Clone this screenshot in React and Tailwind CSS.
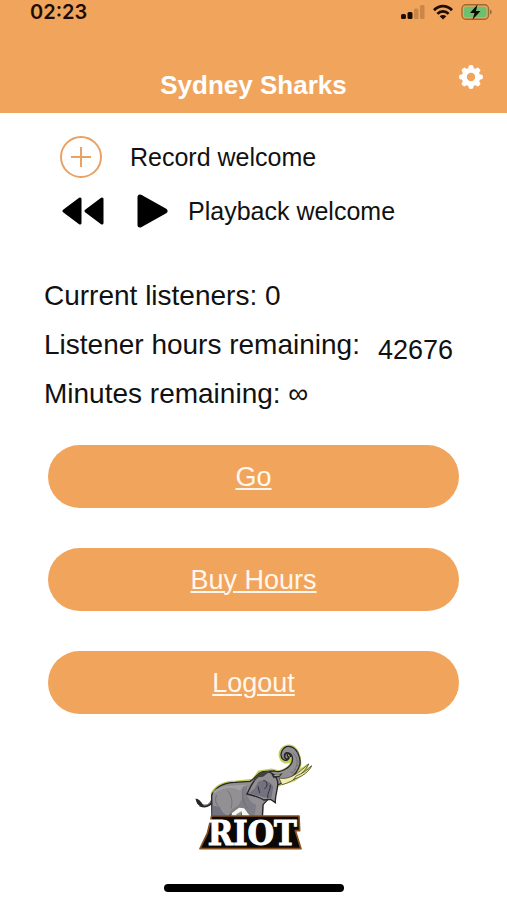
import React from 'react';

const actions = [
    { label: 'Go', href: '#go' },
    { label: 'Buy Hours', href: '#buy-hours' },
    { label: 'Logout', href: '#logout' },
];

const SignalIcon = () => (
    <svg className="w-6 h-4" viewBox="0 0 24 16" aria-hidden="true">
        <rect x="0" y="10" width="5" height="5" rx="1.5" fill="#1c0e04" />
        <rect x="6.5" y="8" width="5" height="7" rx="1.5" fill="#1c0e04" />
        <rect x="13" y="4.5" width="4.5" height="10.5" rx="1.5" fill="#c98647" />
        <rect x="19" y="1" width="4.5" height="14" rx="1.5" fill="#c98647" />
    </svg>
);

const WifiIcon = () => (
    <svg className="w-5 h-4" viewBox="0 0 20 16" aria-hidden="true">
        <g fill="none" stroke="#1c0e04" strokeWidth="2.8">
            <path d="M1 6.200C6 .7 14 .7 19 6.200" />
            <path d="M4.400 9.900C7.500 6.600 12.500 6.600 15.600 9.900" />
        </g>
        <path d="M10 15.600 6.700 12.200C8.500 10.600 11.500 10.600 13.300 12.200Z" fill="#1c0e04" />
    </svg>
);

const BatteryIcon = () => (
    <svg className="w-8 h-4" viewBox="0 0 32 16" aria-hidden="true">
        <rect x="1" y=".7" width="26.5" height="14.6" rx="4" fill="#f1a55c" stroke="#9a6a34" strokeWidth="1.4" />
        <rect x="3" y="2.7" width="22.5" height="10.6" rx="2" fill="#6cc070" />
        <path d="M29 5.500c2.300.7 2.300 4.300 0 5Z" fill="#9a6a34" />
        <path d="M16.500.5 9 9h4.500l-2 6.700L19.500 7H15Z" fill="#140b04" />
    </svg>
);

const GearIcon = () => (
    <svg className="w-6 h-6" viewBox="0 0 24 24" aria-hidden="true">
        <circle cx="12" cy="12" r="6.7" fill="none" stroke="#fff" strokeWidth="5" />
        <g fill="#fff">
            {[0, 45, 90, 135, 180, 225, 270, 315].map((angle) => (
                <path key={angle} d="M9 4 10 .5Q12-.3 14 .5L15 4Z" transform={`rotate(${angle} 12 12)`} />
            ))}
        </g>
    </svg>
);

const RiotLogo = () => (
    <svg className="w-[125px] h-[120px]" viewBox="0 0 375 360" role="img" aria-label="Riot">
        {/* highlight behind the elephant */}
        <path d="M62 170C78 145 100 136 135 136L185 131 203 106 242 100 264 106C288 98 303 86 301 70C298 82 278 85 269 70C258 48 274 28 295 28C318 29 331 60 328 90L322 104 352 85 342 103 360 92 340 113 310 133 270 146 240 160 217 205 214 240H63Z" fill="#c4cc58" stroke="#c4cc58" strokeWidth="5" strokeLinejoin="round" />
        {/* tail */}
        <path d="M68 180C62 207 48 216 26 207" fill="none" stroke="#25252a" strokeWidth="8" />
        <path d="M66 184C60 203 48 211 34 206" fill="none" stroke="#8f8e91" strokeWidth="3" />
        <path d="M16 190C22 190 28 196 35 209L26 207C18 204 19 198 16 190Z" fill="#252821" stroke="#252821" strokeWidth="4" />
        {/* body and legs */}
        <path d="M63 243 62 177C75 151 98 140 132 139L177 136C190 130 197 112 216 107L251 105C266 112 279 102 290 95 303 85 307 73 303 60 297 46 284 54 291 62 296 69 286 78 276 70 263 58 274 31 293 31 316 31 332 65 326 88 316 119 285 140 246 151L233 188 216 206 214 243 178 243 160 219 153 226 154 243 132 243 130 228 111 243Z" fill="#929092" stroke="#272729" strokeWidth="4" />
        <path d="M67 166C91 144 123 150 168 146 157 151 150 156 147 164 124 151 96 154 67 174Z" fill="#a3a1a2" />
        <path d="M169 147C162 177 174 196 196 207L190 241 178 242 160 215 148 222 129 228 108 242 122 222 143 207 154 187 158 157Z" fill="#7f7e86" />
        <path d="M64 211C78 208 90 216 95 229L109 240H64Z" fill="#747380" />
        <path d="M123 231 144 215 160 217 177 240H154L151 226 136 235V240H121Z" fill="#f7f6ef" />
        <path d="M158 151C149 180 157 203 171 218M108 163C122 175 126 196 120 218M77 177C70 192 75 208 88 216" fill="none" stroke="#65646b" strokeWidth="2" />
        {/* ear */}
        <path d="M207 112C193 127 178 150 168 174 188 179 207 184 218 192L239 190 253 200C251 178 263 157 260 137 254 112 233 101 207 112Z" fill="#929092" stroke="#25252a" strokeWidth="4" />
        <path d="M201 137C221 129 240 137 247 153L241 187 216 184C205 176 184 177 174 172L192 156Z" fill="#74727f" />
        <path d="M217 134C231 132 231 155 220 158M238 146C239 163 228 169 230 187M201 151 206 171" fill="none" stroke="#302f39" strokeWidth="3" />
        <path d="M187 127 204 110 242 103 216 122 202 124 190 136Z" fill="#41433b" />
        {/* face */}
        <path d="M238 109C248 117 263 117 275 112L265 124 247 126Z" fill="#2e2e34" />
        <path d="M250 118 266 117" stroke="#e2dc8c" strokeWidth="3" />
        {/* trunk folds */}
        <path d="M305 50C325 65 321 94 303 111M316 50 324 49M319 62 328 62M319 75 329 77M315 88 326 91M308 99 319 104M298 107 307 113" fill="none" stroke="#67666c" strokeWidth="2" />
        <path d="M300 63C294 43 279 50 281 63 286 76 299 67 292 61" fill="none" stroke="#25252a" strokeWidth="5" />
        {/* tusks */}
        <path d="M264 126C291 132 315 118 353 84 342 107 310 137 273 146Z" fill="#f3edb1" stroke="#31301d" strokeWidth="2" />
        <path d="M315 120C335 112 349 103 362 89 354 107 335 121 308 130Z" fill="#efeaa2" stroke="#31301d" strokeWidth="2" />
        {/* wordmark plate */}
        <path d="M62 240H324L326 284H313L330 338H27L49 292Z" fill="#0b0806" stroke="#86501f" strokeWidth="5" strokeLinejoin="round" />
        <text
            x="184"
            y="326"
            textAnchor="middle"
            fontSize="102"
            fontFamily="DejaVu Serif Condensed, DejaVu Serif, serif"
            fontWeight="700"
            fill="#fff"
            stroke="#fff"
            strokeWidth="3"
        >
            RIOT
        </text>
    </svg>
);

const App = () => {
    return (
        <div className="min-h-screen flex flex-col bg-white text-[#111111] font-['Liberation_Sans',Arial,sans-serif]">
            <header className="bg-[#f1a55c] h-[113px] flex flex-col justify-between">
                <div className="flex items-center justify-between pl-[30px] pr-[14px] h-6">
                    <span className="text-[20px] leading-6 font-semibold text-[#1c0e04] font-['Inter',sans-serif]">02:23</span>
                    <div className="flex items-center gap-2">
                        <SignalIcon />
                        <WifiIcon />
                        <BatteryIcon />
                    </div>
                </div>
                <div className="grid grid-cols-[1fr_auto_1fr] items-center px-6 pb-2">
                    <h1 className="col-start-2 text-[26px] leading-8 font-bold text-white">Sydney Sharks</h1>
                    <button type="button" aria-label="Settings" className="justify-self-end mb-4">
                        <GearIcon />
                    </button>
                </div>
            </header>

            <main className="flex-1 flex flex-col">
                <section className="px-[60px] pt-[23px] text-[25px] leading-8">
                    <button type="button" className="flex items-center gap-7">
                        <svg className="w-[42px] h-[42px]" viewBox="0 0 42 42" fill="none" stroke="#e9a263" strokeWidth="2" aria-hidden="true">
                            <circle cx="21" cy="21" r="20" />
                            <path d="M21 11v20M11 21h20" />
                        </svg>
                        Record welcome
                    </button>
                    <div className="flex items-center mt-[15px]">
                        <button type="button" aria-label="Rewind">
                            <svg className="w-11 h-9" viewBox="0 0 44 36" aria-hidden="true">
                                <g stroke="#000" strokeWidth="3" strokeLinejoin="round">
                                    <path d="M4 18 20 6V30Z" />
                                    <path d="M26 18 42 6V30Z" />
                                </g>
                            </svg>
                        </button>
                        <button type="button" className="flex items-center gap-5 ml-8">
                            <svg className="w-8 h-9" viewBox="0 0 32 36" aria-hidden="true">
                                <path d="M4 4V32L29 18Z" stroke="#000" strokeWidth="5" strokeLinejoin="round" />
                            </svg>
                            Playback welcome
                        </button>
                    </div>
                </section>

                <section className="px-11 pt-[51px] flex flex-col gap-[17px] text-[28px] leading-8">
                    <p>Current listeners: 0</p>
                    <p className="flex items-end gap-[18px]">
                        Listener hours remaining:
                        <span className="text-[27px] leading-[22px]">42676</span>
                    </p>
                    <p>Minutes remaining: ∞</p>
                </section>

                <nav className="px-12 pt-[35px] flex flex-col gap-10">
                    {actions.map((action) => (
                        <a
                            key={action.label}
                            href={action.href}
                            className="h-[63px] flex items-center justify-center rounded-full bg-[#f1a55c] text-[#fff7ed] text-[27px] leading-8 underline decoration-2 underline-offset-2"
                        >
                            {action.label}
                        </a>
                    ))}
                </nav>

                <div className="flex justify-center pt-[22px]">
                    <RiotLogo />
                </div>
            </main>

            <footer className="flex justify-center pb-2">
                <div className="w-[180px] h-2 rounded-full bg-black" />
            </footer>
        </div>
    );
};

export default App;
